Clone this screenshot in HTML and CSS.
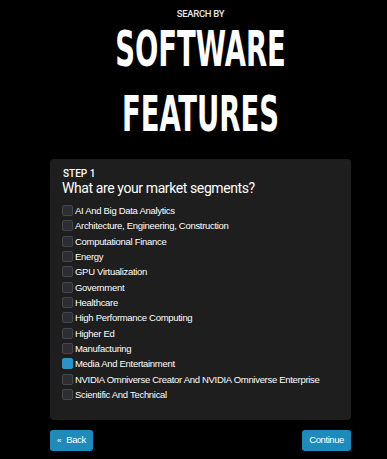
FILE: index.html
```html
<!DOCTYPE html>
<html lang="en">
<head>
  <meta charset="UTF-8">
  <meta name="viewport" content="width=device-width, initial-scale=1.0">
  <title>Search by Software Features</title>
  <link rel="stylesheet" href="styles.css">
</head>
<body>
  <div class="page">
    <div class="eyebrow">SEARCH BY</div>
    <h1 class="title">
      <span class="title-line">SOFTWARE</span>
      <span class="title-line">FEATURES</span>
    </h1>

    <div class="panel">
      <div class="step">STEP 1</div>
      <h2 class="question">What are your market segments?</h2>
      <ul class="options">
        <li class="option"><span class="box"></span>AI And Big Data Analytics</li>
        <li class="option"><span class="box"></span>Architecture, Engineering, Construction</li>
        <li class="option"><span class="box"></span>Computational Finance</li>
        <li class="option"><span class="box"></span>Energy</li>
        <li class="option"><span class="box"></span>GPU Virtualization</li>
        <li class="option"><span class="box"></span>Government</li>
        <li class="option"><span class="box"></span>Healthcare</li>
        <li class="option"><span class="box"></span>High Performance Computing</li>
        <li class="option"><span class="box"></span>Higher Ed</li>
        <li class="option"><span class="box"></span>Manufacturing</li>
        <li class="option"><span class="box checked"></span>Media And Entertainment</li>
        <li class="option"><span class="box"></span>NVIDIA Omniverse Creator And NVIDIA Omniverse Enterprise</li>
        <li class="option"><span class="box"></span>Scientific And Technical</li>
      </ul>
    </div>

    <div class="actions">
      <a class="button" href="#"><span class="arrow">&laquo;</span> Back</a>
      <a class="button" href="#">Continue</a>
    </div>
  </div>
</body>
</html>
```

FILE: styles.css
```css
body {
  margin: 0;
  background-color: #000;
  color: #fff;
  font-family: Roboto, "Liberation Sans", Arial, sans-serif;
}
.page {
  padding: 8px 36px 0 50px;
}
.eyebrow {
  text-align: center;
  font-size: 9.5px;
  font-weight: 500;
  letter-spacing: -0.3px;
  color: #e6e6e6;
  line-height: 12px;
}
.title {
  display: flex;
  flex-direction: column;
  gap: 7px;
  margin: 0 0 16px;
  text-align: center;
  font-family: "DejaVu Sans Condensed", sans-serif;
  font-weight: bold;
  font-size: 50px;
  line-height: 58px;
}
.title-line {
  display: block;
  transform: scaleX(0.61);
}
.panel {
  background-color: #1e1e1e;
  border-radius: 4px;
  padding: 9px 12px 18px;
}
.step {
  font-size: 10px;
  line-height: 11px;
  font-weight: 500;
  margin-left: 1px;
}
.question {
  margin: 0 0 6px;
  font-size: 14px;
  font-weight: 400;
  letter-spacing: -0.4px;
  line-height: 18px;
}
.options {
  list-style: none;
  margin: 0;
  padding: 0;
}
.option {
  display: flex;
  align-items: center;
  height: 15.33px;
  font-family: "Liberation Sans", Arial, sans-serif;
  font-size: 9.5px;
  letter-spacing: -0.3px;
  color: #fff;
}
.box {
  box-sizing: border-box;
  width: 11px;
  height: 11px;
  margin-right: 2px;
  border: 1px solid #44474c;
  border-radius: 2px;
  background-color: #2c2e33;
  flex-shrink: 0;
}
.box.checked {
  background-color: #2a93c8;
  border-color: #2a93c8;
}
.actions {
  display: flex;
  justify-content: space-between;
  margin-top: 10px;
}
.button {
  display: inline-block;
  background-color: #1e8bbb;
  color: #fff;
  font-family: "Liberation Sans", Arial, sans-serif;
  font-size: 9.5px;
  letter-spacing: -0.4px;
  line-height: 20px;
  padding: 0 7px;
  border-radius: 3px;
  text-decoration: none;
}
.arrow {
  font-size: 8px;
  margin-right: 3px;
}
```
